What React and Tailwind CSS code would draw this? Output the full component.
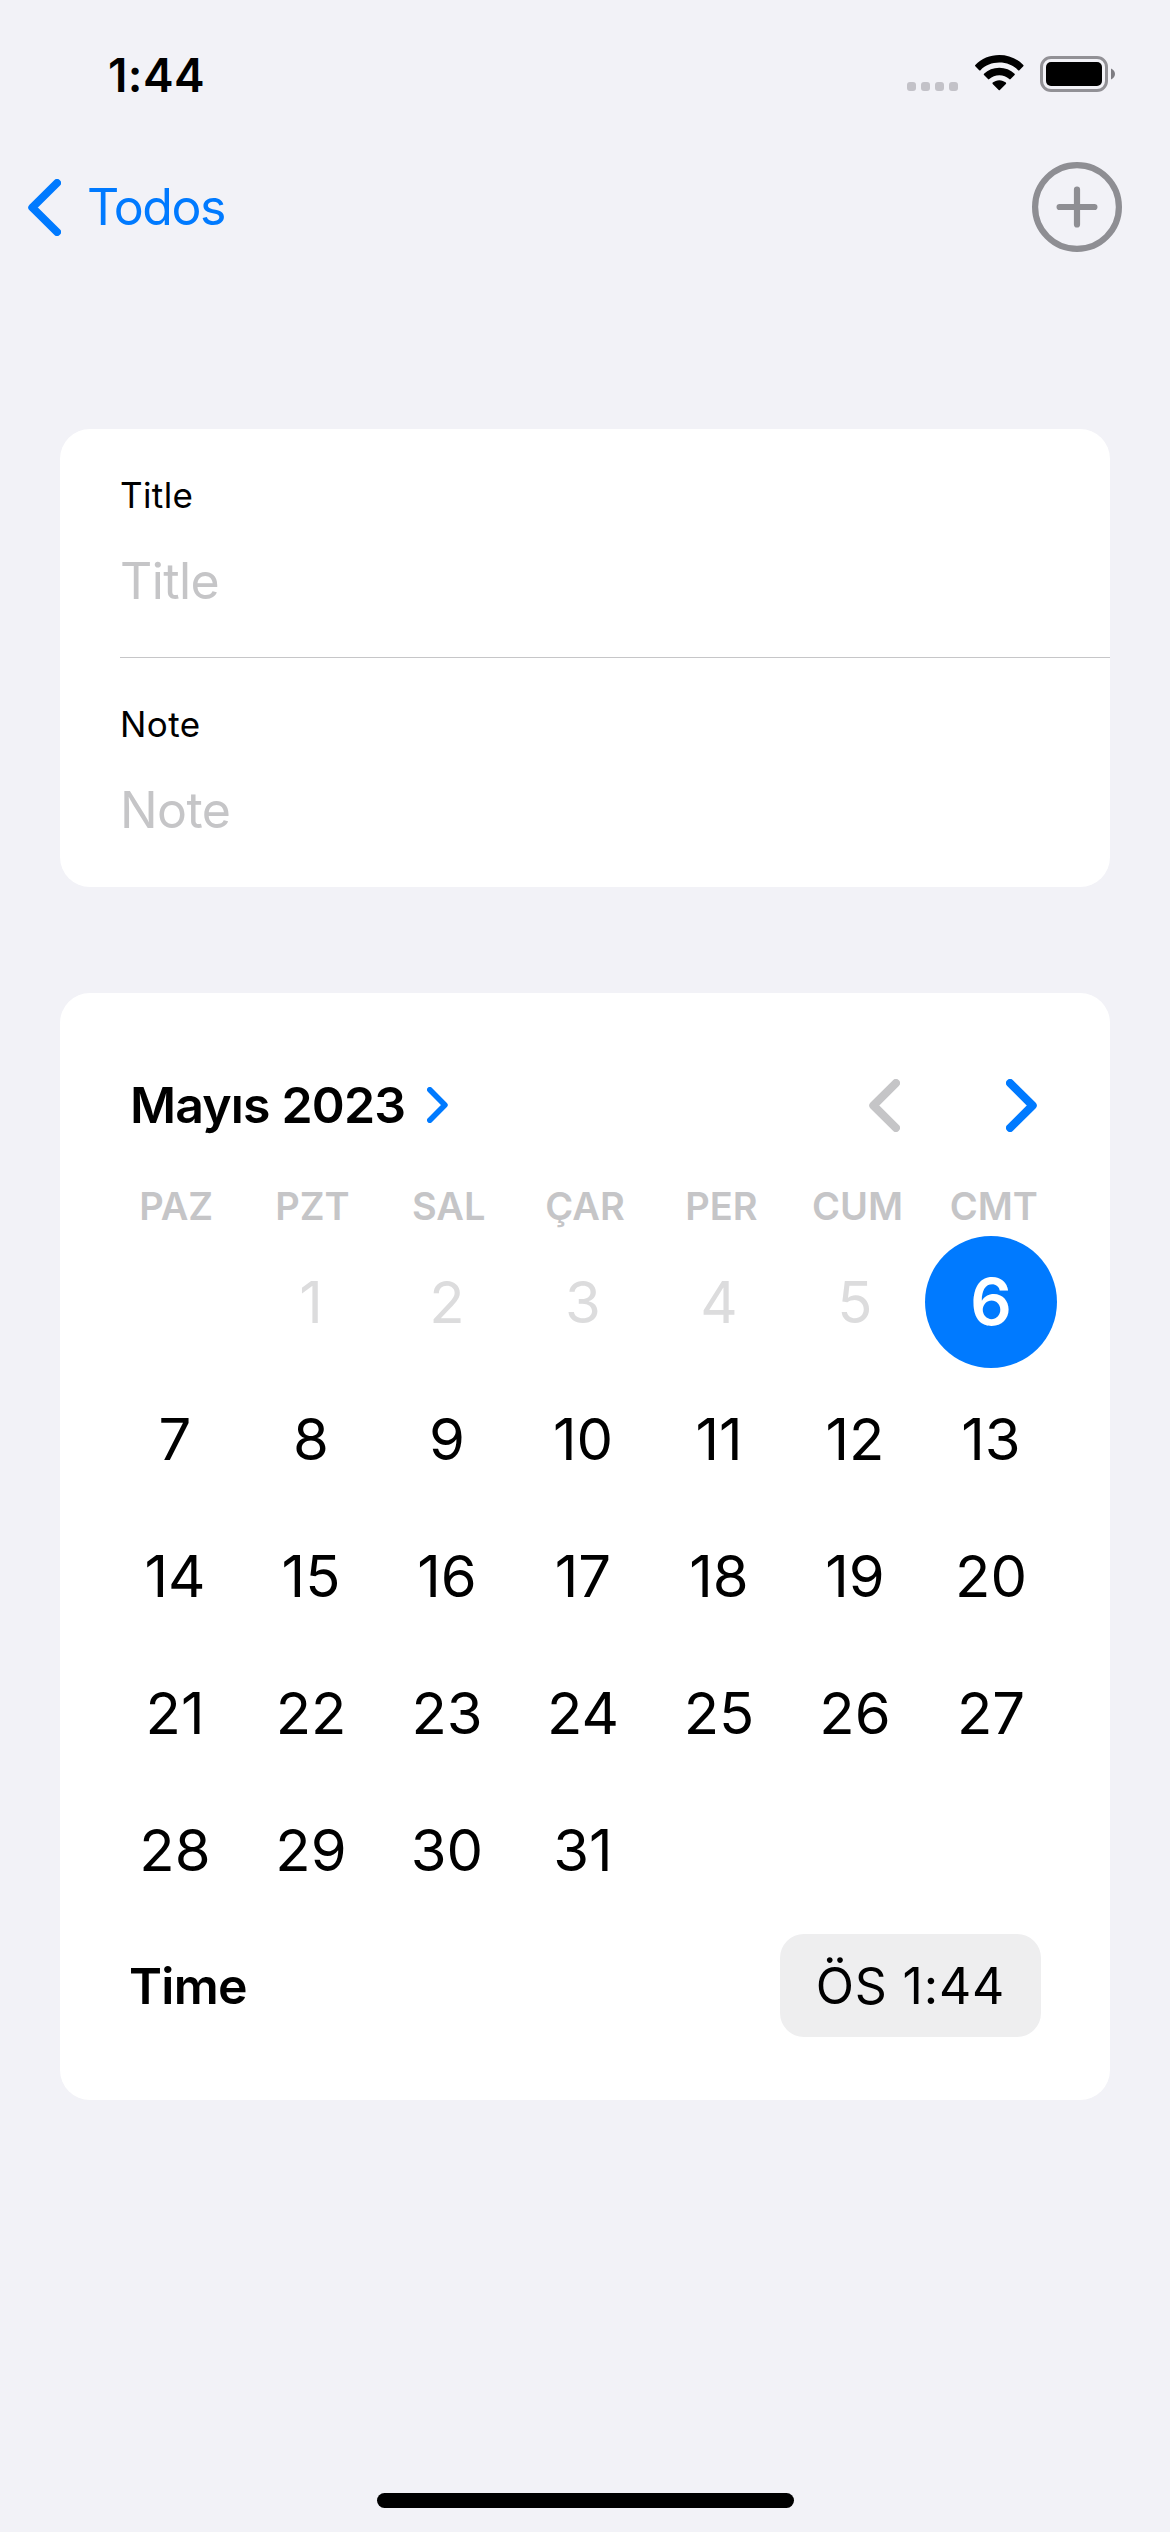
import React from "react";

const WEEKDAYS = ["PAZ", "PZT", "SAL", "ÇAR", "PER", "CUM", "CMT"];
const TODAY = 6;
const DAYS = [null, ...Array.from({ length: 31 }, (_, i) => i + 1)];

function Chevron({ width, height, stroke, direction, className }) {
  const h = stroke / 2;
  const points =
    direction === "left"
      ? `${width - h},${h} ${h + 0.3},${height / 2} ${width - h},${height - h}`
      : `${h},${h} ${width - h - 0.3},${height / 2} ${h},${height - h}`;
  return (
    <svg width={width} height={height} viewBox={`0 0 ${width} ${height}`} fill="none" className={className}>
      <polyline points={points} stroke="currentColor" strokeWidth={stroke} strokeLinecap="round" strokeLinejoin="round" />
    </svg>
  );
}

function StatusBar() {
  return (
    <header className="flex h-[150px] items-center justify-between pl-[108px] pr-[55px]">
      <span className="text-[46px] leading-[60px] font-semibold tracking-[0.4px]">1:44</span>
      <div className="mb-0.5 flex h-9 items-end">
        <div className="mb-px flex gap-[5px]">
          {[0, 1, 2, 3].map((i) => (
            <span key={i} className="size-[9px] rounded-[3px] bg-[#c3c2c8]" />
          ))}
        </div>
        <svg width="49" height="36" viewBox="0 0 49 36" className="mb-px ml-[17px]">
          <path d="M24.300 0C33.600 0 42.200 3.600 48.300 9.900c.4.4.4.900 0 1.300l-3.900 4c-.4.4-.9.4-1.300 0C38.200 10.300 31.500 7.600 24.300 7.600S10.400 10.300 5.500 15.200c-.4.4-.9.4-1.300 0l-3.900-4c-.4-.4-.4-.900 0-1.300C6.400 3.600 15 0 24.300 0z" />
          <path d="M24.300 12.800c5.900 0 11.300 2.200 15.300 6 .4.4.4.900 0 1.300l-4 4c-.4.4-.9.4-1.300 0-2.700-2.400-6.200-3.800-10-3.800s-7.300 1.400-10 3.800c-.4.4-.9.4-1.300 0l-4-4c-.4-.4-.4-.900 0-1.300 4-3.800 9.400-6 15.300-6z" />
          <path d="M24.300 25.200c2.500 0 4.800.9 6.600 2.400.4.4.4.900 0 1.300l-6 6.100c-.4.4-.8.4-1.200 0l-6-6.100c-.4-.4-.4-.900 0-1.300 1.800-1.500 4.100-2.400 6.600-2.400z" />
        </svg>
        <svg width="75" height="36" viewBox="0 0 75 36" className="ml-4">
          <rect x="1.500" y="1.500" width="65" height="33" rx="9.500" fill="none" stroke="#929196" strokeWidth="3" />
          <rect x="6" y="6" width="56" height="24" rx="5" />
          <path d="M71 12.500c2.400 1 4 3 4 5.500s-1.600 4.500-4 5.500z" fill="#7e7d82" />
        </svg>
      </div>
    </header>
  );
}

function NavBar() {
  return (
    <nav className="flex h-[114px] items-center justify-between pl-7 pr-12">
      <button className="flex items-center text-[#007aff]">
        <Chevron width={33} height={57} stroke={8} direction="left" />
        <span className="ml-[26px] text-[50px] leading-[60px] tracking-[-1.5px]">Todos</span>
      </button>
      <button>
        <svg width="90" height="90" viewBox="0 0 90 90" fill="none" stroke="#8e8e93" strokeWidth="6.200" strokeLinecap="round">
          <circle cx="45" cy="45" r="41.900" />
          <path d="M27.600 45h34.800M45 27.600v34.800" />
        </svg>
      </button>
    </nav>
  );
}

function Field({ label }) {
  return (
    <div className="h-[228px] pt-[45px]">
      <div className="text-[35px] leading-[43px] tracking-[0.4px]">{label}</div>
      <div className="mt-[34px] text-[50px] leading-[60px] tracking-[-0.6px] text-[#c5c5c7]">{label}</div>
    </div>
  );
}

function DayCell({ day }) {
  if (day === null) return <span />;
  if (day === TODAY) {
    return (
      <span className="flex h-[137px] items-center justify-center">
        <span className="flex size-[132px] items-center justify-center rounded-full bg-[#007aff] text-[65px] leading-none font-semibold text-white">
          {day}
        </span>
      </span>
    );
  }
  return (
    <span className={"flex h-[137px] items-center justify-center " + (day < TODAY ? "text-[#dcdcdd]" : "text-black")}>
      {day}
    </span>
  );
}

function Calendar() {
  return (
    <section className="mx-[60px] mt-[106px] h-[1107px] rounded-[30px] bg-white pt-[82px]">
      <div className="flex h-[60px] items-center pl-[70px] pr-[73px]">
        <span className="text-[50px] leading-[60px] font-semibold tracking-[-0.85px]">Mayıs 2023</span>
        <Chevron width={21} height={36} stroke={5.6} direction="right" className="ml-[22px] text-[#007aff]" />
        <div className="ml-auto flex gap-[106px]">
          <Chevron width={31} height={53} stroke={8.2} direction="left" className="text-[#c5c5c7]" />
          <Chevron width={31} height={53} stroke={8.2} direction="right" className="text-[#007aff]" />
        </div>
      </div>
      <div className="mt-[46px] ml-[48px] grid w-[954px] grid-cols-7 text-center text-[38px] leading-[50px] font-semibold text-[#c5c5c7]">
        {WEEKDAYS.map((d) => (
          <span key={d}>{d}</span>
        ))}
      </div>
      <div className="mt-[2px] ml-[47px] grid w-[952px] grid-cols-7 text-[58px] leading-none">
        {DAYS.map((d, i) => (
          <DayCell key={i} day={d} />
        ))}
      </div>
      <div className="mt-[16px] flex h-[103px] items-center justify-between pl-[69px] pr-[69px]">
        <span className="text-[50px] leading-[60px] font-semibold tracking-[-0.7px]">Time</span>
        <span className="flex h-[103px] w-[261px] items-center justify-center rounded-[24px] bg-[#eeeeef] text-[50px] leading-[60px] tracking-[0.8px]">
          ÖS 1:44
        </span>
      </div>
    </section>
  );
}

export default function App() {
  return (
    <main className="flex h-[2532px] w-[1170px] flex-col overflow-hidden bg-[#f2f2f7] font-['Inter','Liberation_Sans',sans-serif] text-black">
      <StatusBar />
      <NavBar />
      <section className="mx-[60px] mt-[165px] h-[458px] rounded-[30px] bg-white pl-[60px]">
        <Field label="Title" />
        <div className="h-px bg-[#c6c6c8]" />
        <Field label="Note" />
      </section>
      <Calendar />
      <div className="mx-auto mt-auto mb-6 h-[15px] w-[417px] rounded-full bg-black" />
    </main>
  );
}
